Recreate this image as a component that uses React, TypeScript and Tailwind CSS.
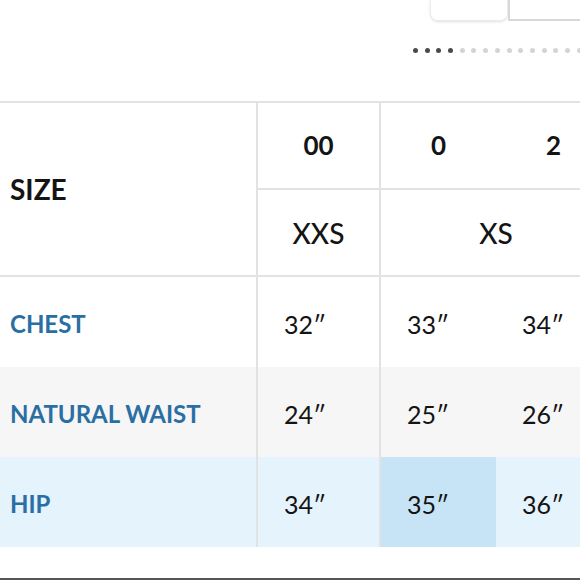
const dots = Array.from({ length: 15 }, (_, i) => i)

type Row = { label: string; values: string[]; bg: string; hi?: number }

const rows: Row[] = [
    { label: 'CHEST', values: ['32″', '33″', '34″'], bg: 'bg-white' },
    { label: 'NATURAL WAIST', values: ['24″', '25″', '26″'], bg: 'bg-[#f6f6f6]' },
    { label: 'HIP', values: ['34″', '35″', '36″'], bg: 'bg-[#e4f3fc]', hi: 1 },
]

const App = () => {
    return (
        <div className="w-[580px] h-[580px] overflow-hidden bg-white flex flex-col font-['Lato',_'Noto_Sans',_sans-serif] text-[#141414]">
            <div className="h-[101px] flex flex-col shrink-0">
                <div className="flex pl-[430px]">
                    <div className="w-[78px] h-[21px] rounded-b-lg border border-t-0 border-[#ececec] shadow-sm" />
                    <div className="flex-1 h-[21px] border-l-2 border-b-2 border-[#d8d8d8]" />
                </div>
                <div className="flex gap-[6.7px] pl-[413px] mt-[27px]">
                    {dots.map((d) => (
                        <span
                            key={d}
                            className={d < 4 ? 'w-[5px] h-[5px] rounded-full bg-[#4a4a4a] shrink-0' : 'w-[5px] h-[5px] rounded-full bg-[#d4d4d4] shrink-0'}
                        />
                    ))}
                </div>
            </div>

            <div className="border-t-2 border-[#e2e2e2] grid grid-cols-[258px_123px_115px_115px] grid-rows-[87px_87px_90px_90px_90px] w-[611px]">
                <div className="row-span-2 border-r-2 border-b-2 border-[#e2e2e2] flex items-center pl-[10px] text-[28px] font-bold">
                    SIZE
                </div>
                <div className="border-r-2 border-b-2 border-[#e2e2e2] flex items-center justify-center text-[26px] font-bold">00</div>
                <div className="border-b-2 border-[#e2e2e2] flex items-center justify-center text-[26px] font-bold">0</div>
                <div className="border-b-2 border-[#e2e2e2] flex items-center justify-center text-[26px] font-bold">2</div>
                <div className="border-r-2 border-b-2 border-[#e2e2e2] flex items-center justify-center text-[28px] font-medium">XXS</div>
                <div className="col-span-2 border-b-2 border-[#e2e2e2] flex items-center justify-center text-[28px] font-medium">XS</div>

                {rows.map((r) => (
                    <div key={r.label} className="contents">
                        <div className={`${r.bg} border-r-2 border-[#e2e2e2] flex items-center pl-[10px] pt-[3px] text-[24px] font-bold text-[#2a6fa3]`}>
                            {r.label}
                        </div>
                        {r.values.map((v, i) => (
                            <div
                                key={v + i}
                                className={`${r.hi === i ? 'bg-[#c6e4f6]' : r.bg} ${i === 0 ? 'border-r-2 border-[#e2e2e2]' : ''} flex items-center pl-[26px] pt-[5px] text-[25px] font-normal`}
                            >
                                {v}
                            </div>
                        ))}
                    </div>
                ))}
            </div>

            <div className="flex-1" />
            <div className="h-[2px] bg-[#555] shrink-0" />
        </div>
    )
}

export default App
